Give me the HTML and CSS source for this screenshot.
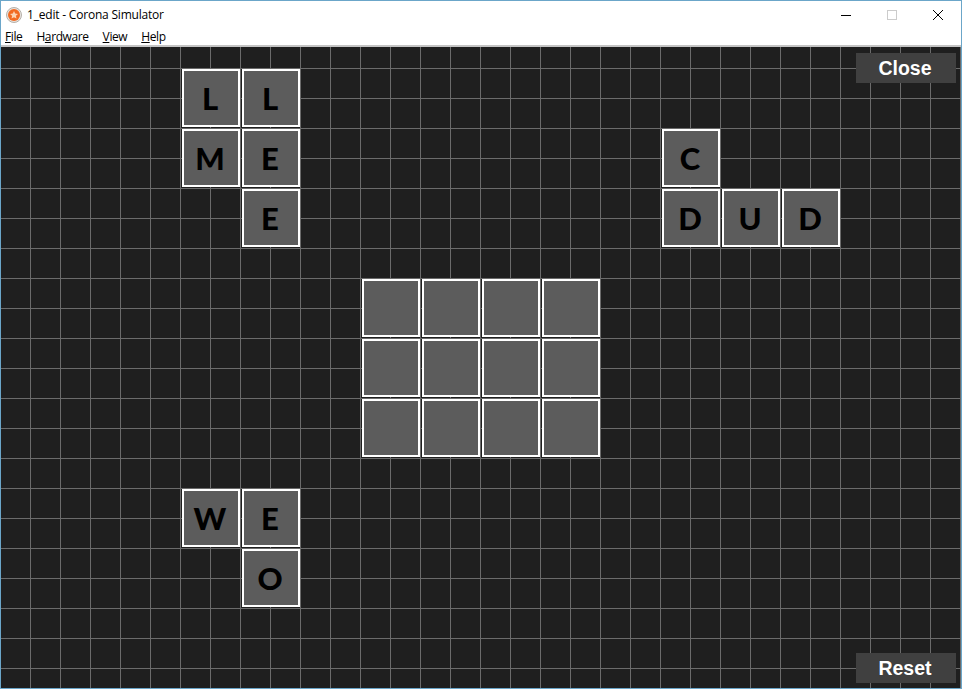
FILE: index.html
```html
<!DOCTYPE html>
<html lang="en">
<head>
  <meta charset="UTF-8">
  <title>1_edit - Corona Simulator</title>
  <link rel="stylesheet" href="styles.css">
</head>
<body>
  <div class="window">
    <div class="titlebar">
      <svg class="app-icon" width="16" height="16" viewBox="0 0 16 16">
        <circle cx="8" cy="8" r="7.5" fill="#e8e4df" stroke="#b5b0aa" stroke-width="1"/>
        <circle cx="8" cy="8" r="6" fill="#f26a21"/>
        <polygon points="8,4 9.2,6.6 12,6.9 9.9,8.8 10.5,11.6 8,10.2 5.5,11.6 6.1,8.8 4,6.9 6.8,6.6" fill="#fbd3b4"/>
      </svg>
      <span class="title">1_edit - Corona Simulator</span>
      <div class="win-controls">
        <svg class="win-btn" width="12" height="12" viewBox="0 0 12 12">
          <path d="M1 6.5H11" stroke="#000" stroke-width="1"/>
        </svg>
        <svg class="win-btn" width="12" height="12" viewBox="0 0 12 12">
          <rect x="1.5" y="1.5" width="9" height="9" fill="none" stroke="#ccc" stroke-width="1"/>
        </svg>
        <svg class="win-btn" width="12" height="12" viewBox="0 0 12 12">
          <path d="M1 1L11 11M11 1L1 11" stroke="#000" stroke-width="1"/>
        </svg>
      </div>
    </div>
    <div class="menubar">
      <span><u>F</u>ile</span>
      <span>H<u>a</u>rdware</span>
      <span><u>V</u>iew</span>
      <span><u>H</u>elp</span>
    </div>
    <div class="board">
      <div class="tile c7 r1">L</div>
      <div class="tile c9 r1">L</div>
      <div class="tile c7 r3">M</div>
      <div class="tile c9 r3">E</div>
      <div class="tile c9 r5">E</div>

      <div class="tile c23 r3">C</div>
      <div class="tile c23 r5">D</div>
      <div class="tile c25 r5">U</div>
      <div class="tile c27 r5">D</div>

      <div class="tile c13 r8"></div>
      <div class="tile c15 r8"></div>
      <div class="tile c17 r8"></div>
      <div class="tile c19 r8"></div>
      <div class="tile c13 r10"></div>
      <div class="tile c15 r10"></div>
      <div class="tile c17 r10"></div>
      <div class="tile c19 r10"></div>
      <div class="tile c13 r12"></div>
      <div class="tile c15 r12"></div>
      <div class="tile c17 r12"></div>
      <div class="tile c19 r12"></div>

      <div class="tile c7 r15">W</div>
      <div class="tile c9 r15">E</div>
      <div class="tile c9 r17">O</div>

      <button class="board-btn close-btn">Close</button>
      <button class="board-btn reset-btn">Reset</button>
    </div>
  </div>
</body>
</html>
```

FILE: styles.css
```css
* {
  margin: 0;
  padding: 0;
  box-sizing: border-box;
}

html, body {
  width: 962px;
  height: 689px;
  overflow: hidden;
}

.window {
  width: 962px;
  height: 689px;
  display: flex;
  flex-direction: column;
  border: 1px solid #6ba6c9;
  background: #fff;
}

.titlebar {
  height: 27px;
  flex: none;
  display: flex;
  align-items: center;
  padding-left: 5px;
  font-family: "Open Sans", sans-serif;
  font-size: 12px;
  color: #000;
}

.app-icon {
  margin-right: 5px;
}

.title {
  letter-spacing: -0.2px;
}

.win-controls {
  margin-left: auto;
  display: flex;
}

.win-btn {
  width: 12px;
  height: 12px;
  margin: 0 17px;
}

.menubar {
  height: 17px;
  flex: none;
  display: flex;
  gap: 14px;
  padding-left: 4px;
  font-family: "Open Sans", sans-serif;
  font-size: 12px;
  line-height: 17px;
  letter-spacing: -0.4px;
  color: #000;
}

.board {
  position: relative;
  flex: 1;
  display: grid;
  grid-template-columns: repeat(32, 30px);
  grid-auto-rows: 30px;
  padding-top: 21px;
  border-top: 2px solid #c4c4c4;
  background-color: #1f1f1f;
  background-image:
    linear-gradient(to right, #6b6b6b 1px, transparent 1px),
    linear-gradient(to bottom, #6b6b6b 1px, transparent 1px);
  background-size: 30px 30px;
  background-position: 29px 21px;
}

.tile {
  grid-column-end: span 2;
  grid-row-end: span 2;
  margin: 1px;
  display: flex;
  align-items: center;
  justify-content: center;
  padding-right: 2px;
  border: 2px solid #fff;
  background: #5c5c5c;
  font-family: Lato, sans-serif;
  font-weight: 900;
  font-size: 31px;
  color: #000;
}

.c7 { grid-column-start: 7; }
.c9 { grid-column-start: 9; }
.c13 { grid-column-start: 13; }
.c15 { grid-column-start: 15; }
.c17 { grid-column-start: 17; }
.c19 { grid-column-start: 19; }
.c23 { grid-column-start: 23; }
.c25 { grid-column-start: 25; }
.c27 { grid-column-start: 27; }

.r1 { grid-row-start: 1; }
.r3 { grid-row-start: 3; }
.r5 { grid-row-start: 5; }
.r8 { grid-row-start: 8; }
.r10 { grid-row-start: 10; }
.r12 { grid-row-start: 12; }
.r15 { grid-row-start: 15; }
.r17 { grid-row-start: 17; }

.board-btn {
  position: absolute;
  right: 5px;
  width: 100px;
  height: 30px;
  padding-right: 2px;
  border: none;
  background: #404040;
  color: #fff;
  font-family: "Liberation Sans", sans-serif;
  font-weight: 700;
  font-size: 19.5px;
}

.close-btn {
  top: 6px;
}

.reset-btn {
  bottom: 5px;
}
```
